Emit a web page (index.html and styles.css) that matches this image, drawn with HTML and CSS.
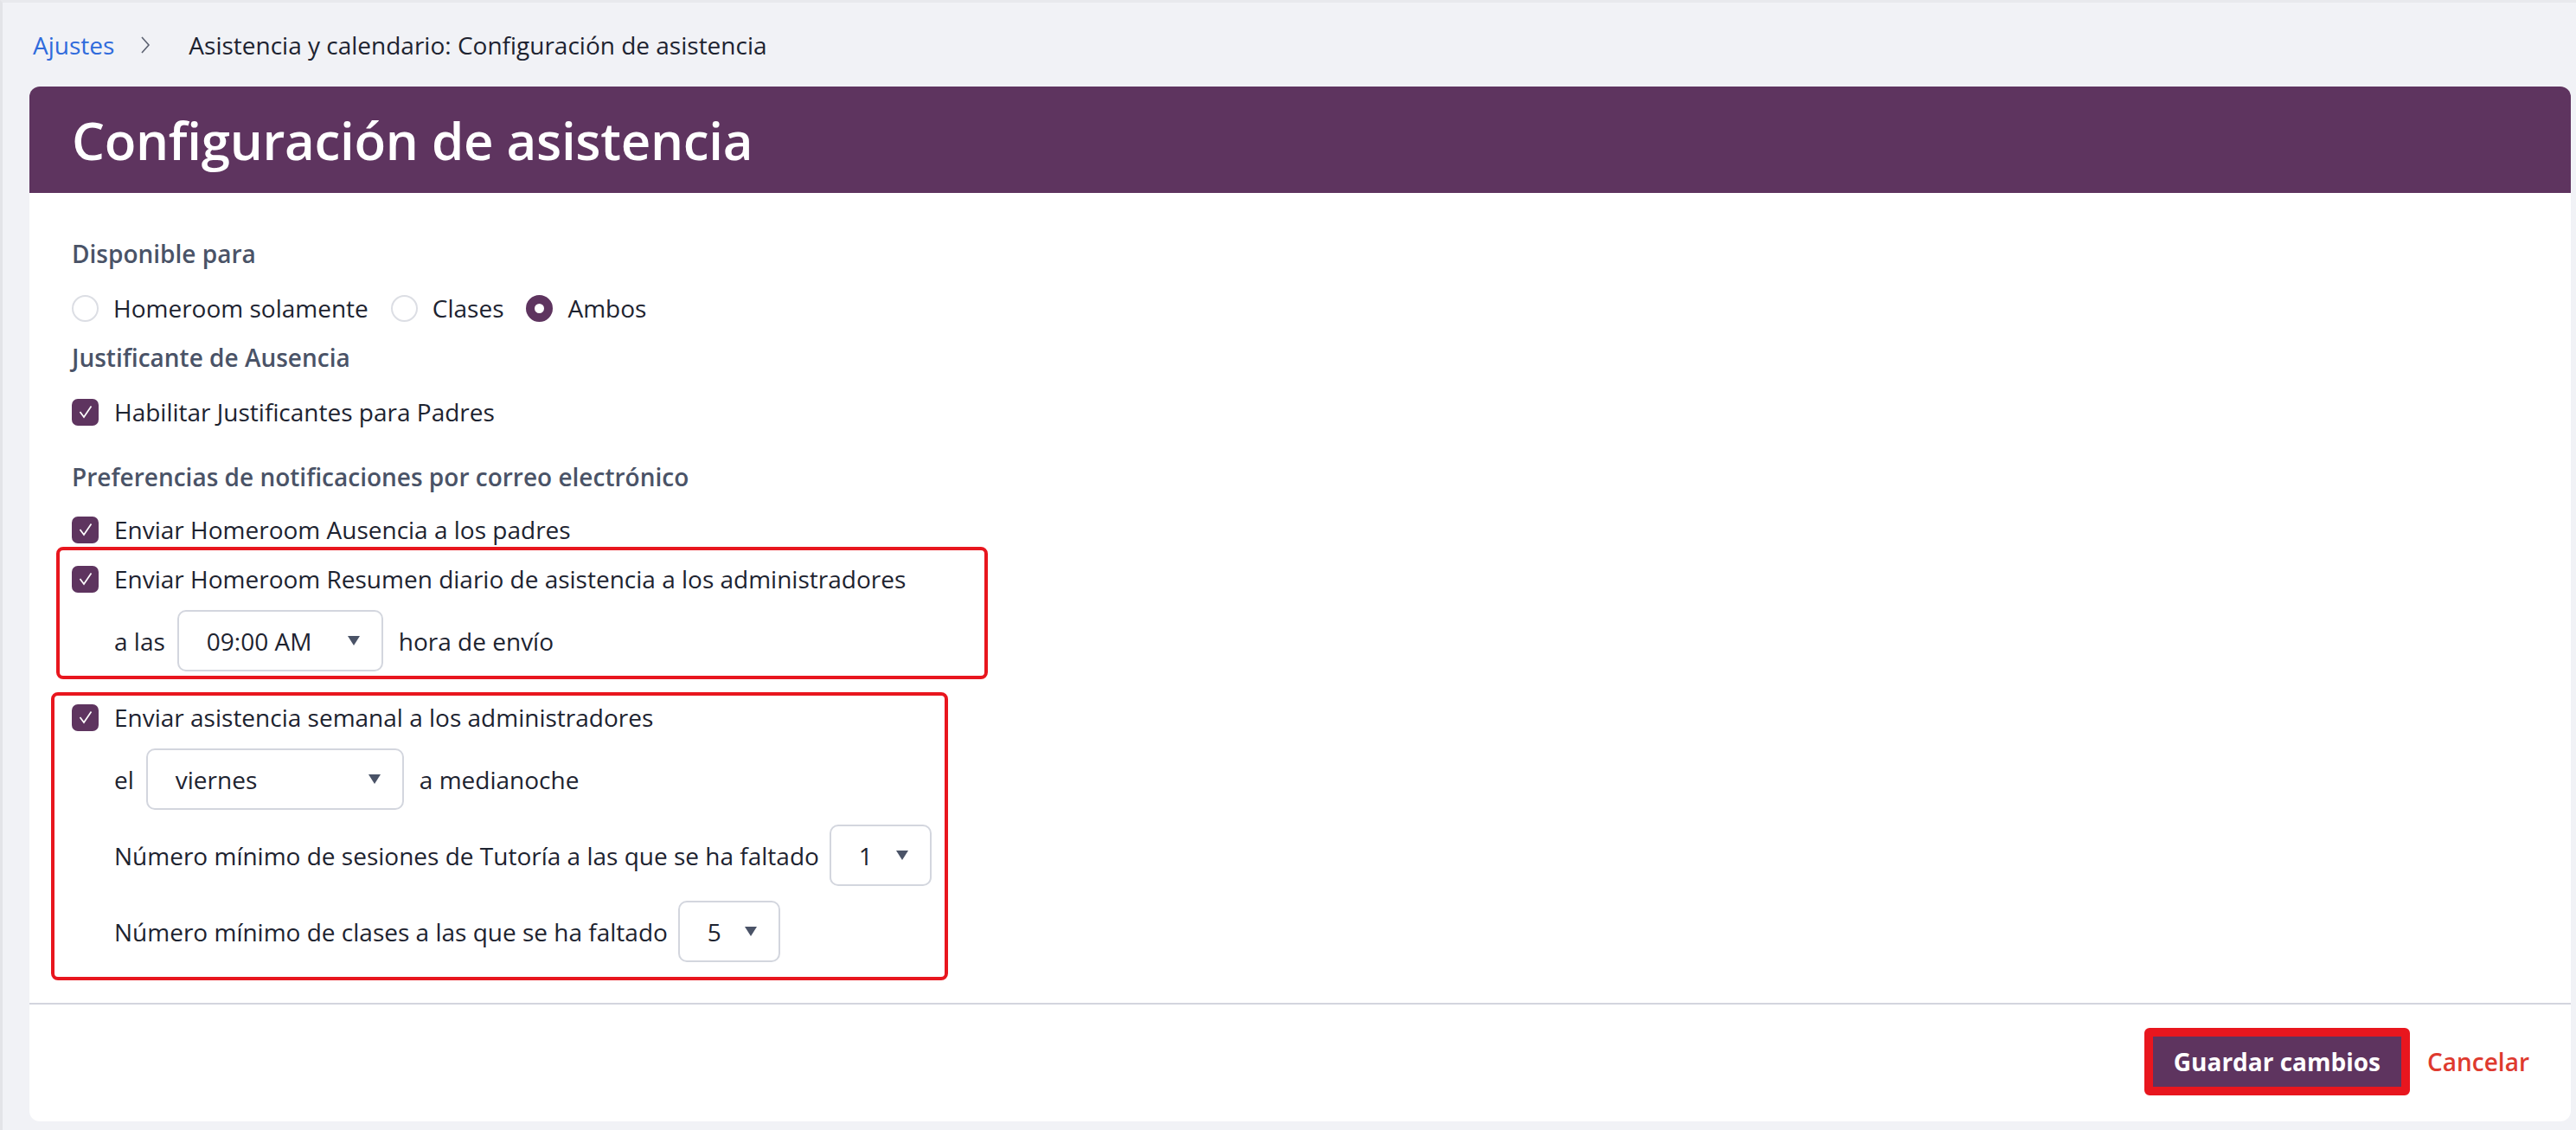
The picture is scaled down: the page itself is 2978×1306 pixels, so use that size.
FILE: index.html
```html
<!DOCTYPE html>
<html lang="es">
<head>
    <meta charset="UTF-8">
    <meta name="viewport" content="width=device-width, initial-scale=1.0">
    <title>Configuración de asistencia</title>
    <link rel="stylesheet" href="styles.css">
</head>
<body>
    <div class="breadcrumb">
        <a href="#" class="crumb-link">Ajustes</a>
        <svg class="crumb-sep" width="12" height="22" viewBox="0 0 12 22"><polyline points="2,2 10,11 2,20" fill="none" stroke="#5b6170" stroke-width="1.6"/></svg>
        <span class="crumb-current">Asistencia y calendario: Configuración de asistencia</span>
    </div>

    <div class="card">
        <div class="card-header">
            <h1>Configuración de asistencia</h1>
        </div>

        <div class="card-body">
            <div class="section-title">Disponible para</div>
            <div class="row radios">
                <label class="opt"><span class="radio"></span>Homeroom solamente</label>
                <label class="opt"><span class="radio"></span>Clases</label>
                <label class="opt"><span class="radio checked"></span>Ambos</label>
            </div>

            <div class="section-title gap-small">Justificante de Ausencia</div>
            <div class="row gap-title">
                <span class="check"><svg width="18" height="18" viewBox="0 0 18 18"><polyline points="2.5,9 7,15 15.5,2.5" fill="none" stroke="#fff" stroke-width="1.7"/></svg></span>
                Habilitar Justificantes para Padres
            </div>

            <div class="section-title gap-large">Preferencias de notificaciones por correo electrónico</div>
            <div class="row gap-title2">
                <span class="check"><svg width="18" height="18" viewBox="0 0 18 18"><polyline points="2.5,9 7,15 15.5,2.5" fill="none" stroke="#fff" stroke-width="1.7"/></svg></span>
                Enviar Homeroom Ausencia a los padres
            </div>

            <div class="highlight box-daily">
                <div class="row">
                    <span class="check"><svg width="18" height="18" viewBox="0 0 18 18"><polyline points="2.5,9 7,15 15.5,2.5" fill="none" stroke="#fff" stroke-width="1.7"/></svg></span>
                    Enviar Homeroom Resumen diario de asistencia a los administradores
                </div>
                <div class="sub-row">
                    <span>a las</span>
                    <div class="select sel-time"><span>09:00 AM</span><span class="caret"></span></div>
                    <span>hora de envío</span>
                </div>
            </div>

            <div class="highlight box-weekly">
                <div class="row">
                    <span class="check"><svg width="18" height="18" viewBox="0 0 18 18"><polyline points="2.5,9 7,15 15.5,2.5" fill="none" stroke="#fff" stroke-width="1.7"/></svg></span>
                    Enviar asistencia semanal a los administradores
                </div>
                <div class="sub-row">
                    <span>el</span>
                    <div class="select sel-day"><span>viernes</span><span class="caret"></span></div>
                    <span>a medianoche</span>
                </div>
                <div class="sub-row">
                    <span>Número mínimo de sesiones de Tutoría a las que se ha faltado</span>
                    <div class="select sel-num"><span>1</span><span class="caret"></span></div>
                </div>
                <div class="sub-row">
                    <span>Número mínimo de clases a las que se ha faltado</span>
                    <div class="select sel-num"><span>5</span><span class="caret"></span></div>
                </div>
            </div>
        </div>

        <div class="card-footer">
            <button class="btn-save">Guardar cambios</button>
            <a href="#" class="btn-cancel">Cancelar</a>
        </div>
    </div>
</body>
</html>
```

FILE: styles.css
```css
html, body {
    margin: 0;
    padding: 0;
}
body {
    background-color: #f1f2f6;
    font-family: "Open Sans", "Noto Sans", sans-serif;
    font-size: 28px;
    color: #1d2330;
    border-top: 3px solid #e8e9ed;
    border-left: 3px solid #e3e4e8;
    padding: 0 6px 10px 31px;
    box-sizing: border-box;
    height: 1306px;
}
.breadcrumb {
    height: 97px;
    display: flex;
    align-items: center;
    padding-left: 4px;
}
.crumb-link {
    color: #2f6bdc;
    text-decoration: none;
}
.crumb-sep {
    margin: 0 44px 0 30px;
}
.crumb-current { color: #1d2330; }

.card {
    background: #fff;
    border-radius: 12px;
    overflow: hidden;
}
.card-header {
    background: #5e345f;
    height: 123px;
    display: flex;
    align-items: center;
    padding-left: 49px;
}
.card-header h1 {
    margin: 0;
    color: #fff;
    font-size: 60px;
    font-weight: 600;
    letter-spacing: -0.3px;
}
.card-body {
    padding: 50px 49px 26px;
}
.section-title {
    color: #4a5367;
    font-weight: 600;
    line-height: 40px;
}
.gap-small { margin-top: 17px; }
.gap-large { margin-top: 35px; }
.row {
    display: flex;
    align-items: center;
    gap: 18px;
    height: 40px;
}
.radios {
    margin-top: 23px;
    gap: 26px;
}
.gap-title { margin-top: 23px; }
.gap-title2 { margin-top: 21px; }
.opt {
    display: flex;
    align-items: center;
    gap: 17px;
}
.radio {
    width: 31px;
    height: 31px;
    border-radius: 50%;
    border: 2px solid #dcdee4;
    box-sizing: border-box;
    background: #fff;
}
.radio.checked {
    border: 10px solid #5e345f;
}
.check {
    width: 31px;
    height: 31px;
    border-radius: 7px;
    background: #5e345f;
    display: flex;
    align-items: center;
    justify-content: center;
    flex-shrink: 0;
}

.highlight {
    border: 4px solid #e8161e;
    border-radius: 8px;
    box-sizing: border-box;
}
.box-daily {
    margin-left: -18px;
    width: 1077px;
    padding: 13px 0 5px 14px;
}
.box-weekly {
    margin-left: -24px;
    width: 1037px;
    margin-top: 15px;
    padding: 5px 0 17px 20px;
}
.sub-row {
    display: flex;
    align-items: center;
    gap: 18px;
    padding-left: 49px;
    margin-top: 17px;
}
.box-daily .sub-row { margin-top: 16px; }
.box-weekly .sub-row:nth-child(2) { margin-top: 16px; }
.select {
    height: 71px;
    border: 2px solid #d3d6de;
    border-radius: 10px;
    box-sizing: border-box;
    display: flex;
    align-items: center;
    justify-content: space-between;
    padding: 0 25px 0 32px;
}
.sel-time { width: 238px; margin-left: -4px; }
.sel-day { width: 298px; margin-left: -4px; }
.sel-num { width: 118px; margin-left: -6px; }
.caret {
    width: 0;
    height: 0;
    border-left: 7px solid transparent;
    border-right: 7px solid transparent;
    border-top: 11px solid #4a5367;
}

.card-footer {
    border-top: 2px solid #d3d5de;
    display: flex;
    justify-content: flex-end;
    align-items: center;
    gap: 20px;
    padding: 27px 48px 30px;
}
.btn-save {
    background: #5e345f;
    color: #fff;
    font-family: inherit;
    font-size: 28px;
    font-weight: 700;
    border: 10px solid #e8161e;
    border-radius: 6px;
    padding: 0 24px;
    height: 78px;
}
.btn-cancel {
    color: #de3a2f;
    font-weight: 600;
    text-decoration: none;
}
```
